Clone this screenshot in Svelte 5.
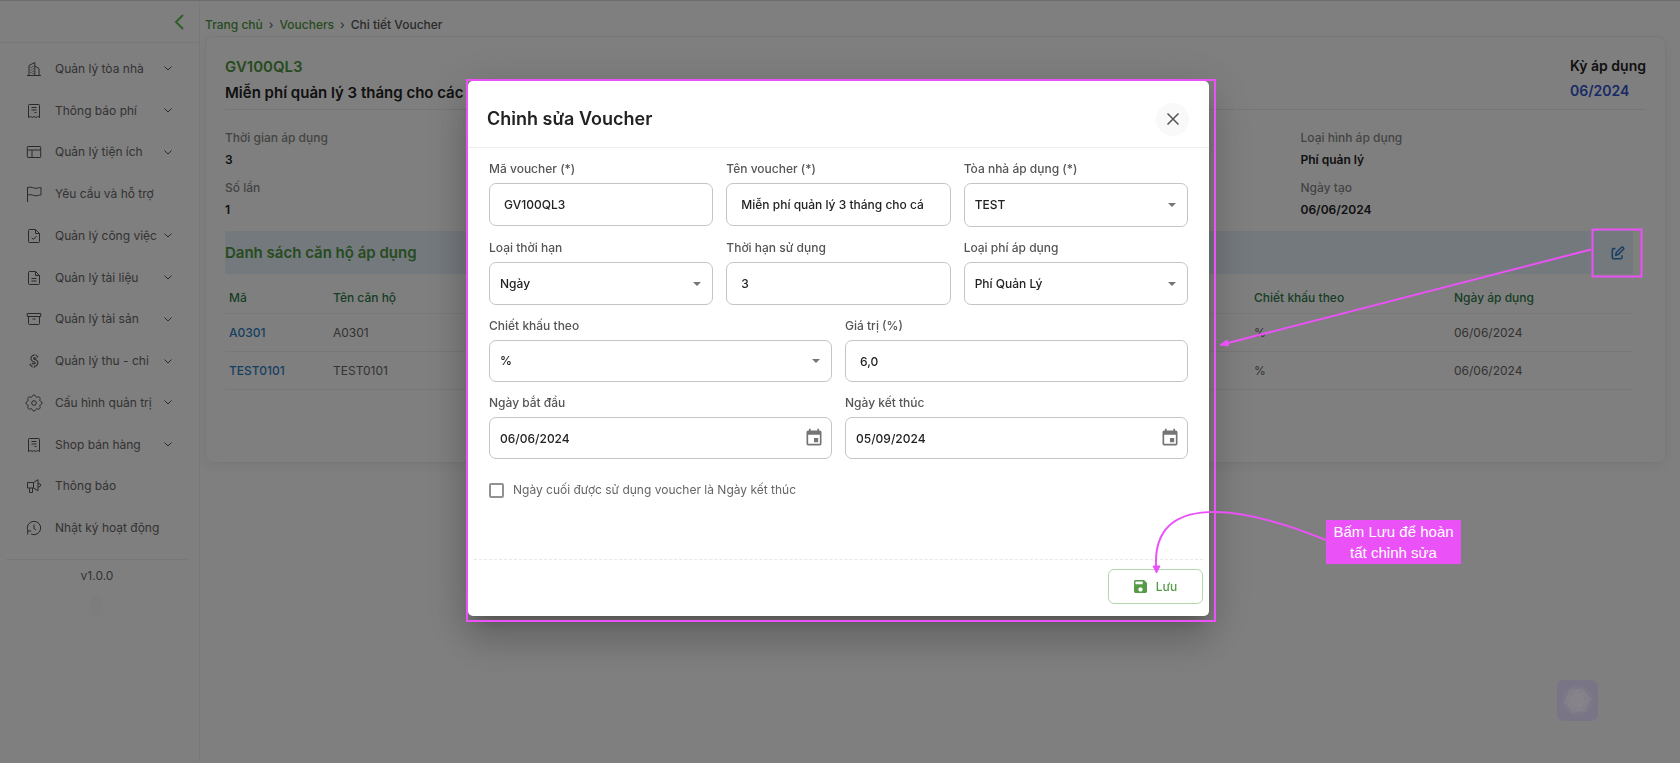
<script>
	let menu = [
		{ label: "Quản lý tòa nhà", icon: "building", sub: true },
		{ label: "Thông báo phí", icon: "receipt", sub: true },
		{ label: "Quản lý tiện ích", icon: "layout", sub: true },
		{ label: "Yêu cầu và hỗ trợ", icon: "flag", sub: false },
		{ label: "Quản lý công việc", icon: "fileCheck", sub: true },
		{ label: "Quản lý tài liệu", icon: "file", sub: true },
		{ label: "Quản lý tài sản", icon: "archive", sub: true },
		{ label: "Quản lý thu - chi", icon: "dollar", sub: true },
		{ label: "Cấu hình quản trị", icon: "gear", sub: true },
		{ label: "Shop bán hàng", icon: "receipt", sub: true },
		{ label: "Thông báo", icon: "horn", sub: false },
		{ label: "Nhật ký hoạt động", icon: "history", sub: false },
	];

	// 16x16 outlines
	const icons = {
		building:
			"M1 14.500h14M3 14.500V4.500L8.800 1.500v13M8.800 5L13 7.500v7M5 6v1M5 8.500v1M5 11v1M7 5v1M7 7.500v1M7 10v1M7 12v1",
		receipt:
			"M2.500 14.500V2.300q0-.8.8-.8h9.400q.8 0 .8.8V14.500l-1.900-1-1.800 1-1.800-1-1.800 1-1.800-1zM5.500 4.500h5M5.500 7h5M8.500 9.500h2",
		layout: "M2 2.500h12q.7 0 .7.7v9.600q0 .7-.7.7H2q-.7 0-.7-.7V3.200q0-.7.7-.7zM1.300 6h13.400M6 6v7.500",
		flag: "M1.500 16V1.200M1.500 1.500c4-1.500 6 1.500 9.500.7 2-.4 3-.9 4-.7v7.500c-1-.2-2 .3-4 .7-3.500.8-5.500-2.200-9.500-.7",
		fileCheck:
			"M3.500 1.500h6l4 4v8q0 1-1 1h-9q-1 0-1-1v-11q0-1 1-1zM9.500 1.500v4h4M5.700 9.700l1.700 1.700 3-3.200",
		file: "M3.500 1.500h6l4 4v8q0 1-1 1h-9q-1 0-1-1v-11q0-1 1-1zM9.500 1.500v4h4M5.500 8.500h5M5.500 11h5",
		archive: "M1.300 2.500h13.400v3H1.300zM2.500 5.500v7q0 1 1 1h9q1 0 1-1v-7M6.500 8h3",
		dollar:
			"M11.200 4.800Q10 3.400 8.300 3.600 6 4 6.200 5.800 6.500 7.200 8.500 7.800 11 8.500 10.500 10.400 9.800 12.400 7.500 12.200 5.600 12 4.800 10.400M9.200 1.700L8.800 3.600M7.400 12.200L7 14.300",
		gear: "M9.796 1.343c-.527-1.790-3.065-1.790-3.592 0l-.094.319a.873.873 0 0 1-1.255.520l-.292-.160c-1.640-.892-3.433.902-2.540 2.541l.159.292a.873.873 0 0 1-.520 1.255l-.319.094c-1.790.527-1.790 3.065 0 3.592l.319.094a.873.873 0 0 1 .520 1.255l-.160.292c-.892 1.640.901 3.434 2.541 2.540l.292-.159a.873.873 0 0 1 1.255.520l.094.319c.527 1.790 3.065 1.790 3.592 0l.094-.319a.873.873 0 0 1 1.255-.520l.292.160c1.640.893 3.434-.902 2.540-2.541l-.159-.292a.873.873 0 0 1 .520-1.255l.319-.094c1.790-.527 1.790-3.065 0-3.592l-.319-.094a.873.873 0 0 1-.520-1.255l.160-.292c.893-1.640-.902-3.433-2.541-2.540l-.292.159a.873.873 0 0 1-1.255-.520zM10.300 8a2.300 2.300 0 1 1-4.600 0 2.300 2.300 0 1 1 4.600 0z",
		horn: "M1.500 4.500h6L12 1.700v11L7.500 10h-6zM7.500 4.500V10M3.500 10v4.500h3V10M12 5.500q2.800 0 2.800 1.700T12 9",
		history: "M2 11A6.700 6.700 0 1 1 5 14M1.700 14.500V11h3.500M8 4.500v4l2 1.500",
	};

	let rows = [
		{ code: "A0301", name: "A0301", by: "%", date: "06/06/2024" },
		{ code: "TEST0101", name: "TEST0101", by: "%", date: "06/06/2024" },
	];

	let code = "GV100QL3";
	let title = "Miễn phí quản lý 3 tháng cho cá";
	let duration = "3";
	let amount = "6,0";
	let startDate = "06/06/2024";
	let endDate = "05/09/2024";
	let lastDay = false;
</script>

{#snippet caret()}
	<svg class="caret" viewBox="0 0 8 4" aria-hidden="true"><path d="M0 0h8L4 4z" /></svg>
{/snippet}

{#snippet calendar()}
	<svg viewBox="0 0 24 24" width="20" height="20" aria-hidden="true">
		<path
			fill="currentColor"
			d="M17 12h-5v5h5v-5zM16 1v2H8V1H6v2H5c-1.100 0-2 .9-2 2v14c0 1.100.9 2 2 2h14c1.100 0 2-.9 2-2V5c0-1.100-.9-2-2-2h-1V1h-2zm3 18H5V8h14v11z"
		/>
	</svg>
{/snippet}

<div class="page">
	<aside>
		<div class="side-head">
			<button aria-label="Thu gọn">
				<svg viewBox="0 0 10 16" width="10" height="16"><path d="M9 1L2 8l7 7" /></svg>
			</button>
		</div>
		<nav>
			{#each menu as item}
				<a href="#menu">
					<svg class="icon" viewBox="0 0 16 16">
						{#if item.icon === "dollar"}
							<path class="outer" d={icons.dollar} />
							<path class="inner" d={icons.dollar} />
						{:else}
							<path d={icons[item.icon]} />
						{/if}
					</svg>
					<span>{item.label}</span>
					{#if item.sub}
						<svg class="chevron" viewBox="0 0 8 5"><path d="M.5.5L4 4 7.500.5" /></svg>
					{/if}
				</a>
			{/each}
		</nav>
		<p class="version">v1.0.0</p>
		<div class="pill"></div>
	</aside>

	<main>
		<div class="breadcrumb">
			<a href="#home">Trang chủ</a>
			<span class="sep">›</span>
			<a href="#vouchers">Vouchers</a>
			<span class="sep">›</span>
			<span>Chi tiết Voucher</span>
		</div>

		<section class="card">
			<div class="card-head">
				<div>
					<h2 class="green">GV100QL3</h2>
					<h2>Miễn phí quản lý 3 tháng cho các</h2>
				</div>
				<div class="period">
					<p>Kỳ áp dụng</p>
					<p class="blue">06/2024</p>
				</div>
			</div>

			<div class="info">
				<dl>
					<dt>Thời gian áp dụng</dt>
					<dd>3</dd>
					<dt>Số lần</dt>
					<dd>1</dd>
				</dl>
				<dl class="last">
					<dt>Loại hình áp dụng</dt>
					<dd>Phí quản lý</dd>
					<dt>Ngày tạo</dt>
					<dd>06/06/2024</dd>
				</dl>
			</div>

			<div class="list">
				<div class="list-head">
					<h3>Danh sách căn hộ áp dụng</h3>
					<button aria-label="Chỉnh sửa">
						<svg viewBox="0 0 16 16" width="14" height="14">
							<path d="M5 3H3Q1.500 3 1.500 4.500v8.500q0 1.500 1.500 1.500h8q1.500 0 1.500-1.500v-2.500M5.500 10.500l.5-3 6-6q1-.8 2 .2t.2 2l-6 6z" />
						</svg>
					</button>
				</div>
				<table>
					<thead>
						<tr>
							<th class="c-code">Mã</th>
							<th>Tên căn hộ</th>
							<th class="c-by">Chiết khấu theo</th>
							<th class="c-date">Ngày áp dụng</th>
						</tr>
					</thead>
					<tbody>
						{#each rows as row}
							<tr>
								<td><a href="#unit">{row.code}</a></td>
								<td>{row.name}</td>
								<td>{row.by}</td>
								<td>{row.date}</td>
							</tr>
						{/each}
					</tbody>
				</table>
			</div>
		</section>
	</main>
</div>

<div class="backdrop">
	<div class="dialog" role="dialog" aria-labelledby="dialog-title">
		<header>
			<h1 id="dialog-title">Chỉnh sửa Voucher</h1>
			<button aria-label="Đóng">
				<svg viewBox="0 0 12 12" width="12" height="12"><path d="M.5.5l11 11M11.500.5l-11 11" /></svg>
			</button>
		</header>

		<form>
			<div class="row three">
				<div class="field">
					<label for="code">Mã voucher (*)</label>
					<input id="code" type="text" bind:value={code} />
				</div>
				<div class="field">
					<label for="title">Tên voucher (*)</label>
					<input id="title" type="text" bind:value={title} />
				</div>
				<div class="field">
					<label for="building">Tòa nhà áp dụng (*)</label>
					<div class="select">
						<select id="building" class="tall"><option>TEST</option></select>
						{@render caret()}
					</div>
				</div>
			</div>
			<div class="row three">
				<div class="field">
					<label for="unit">Loại thời hạn</label>
					<div class="select">
						<select id="unit"><option>Ngày</option></select>
						{@render caret()}
					</div>
				</div>
				<div class="field">
					<label for="duration">Thời hạn sử dụng</label>
					<input id="duration" type="text" bind:value={duration} />
				</div>
				<div class="field">
					<label for="fee">Loại phí áp dụng</label>
					<div class="select">
						<select id="fee"><option>Phí Quản Lý</option></select>
						{@render caret()}
					</div>
				</div>
			</div>
			<div class="row">
				<div class="field">
					<label for="by">Chiết khấu theo</label>
					<div class="select">
						<select id="by" class="short"><option>%</option></select>
						{@render caret()}
					</div>
				</div>
				<div class="field">
					<label for="amount">Giá trị (%)</label>
					<input id="amount" class="short" type="text" bind:value={amount} />
				</div>
			</div>
			<div class="row">
				<div class="field">
					<label for="start">Ngày bắt đầu</label>
					<div class="date">
						<input id="start" type="text" bind:value={startDate} />
						<button type="button" aria-label="Chọn ngày bắt đầu">{@render calendar()}</button>
					</div>
				</div>
				<div class="field">
					<label for="end">Ngày kết thúc</label>
					<div class="date">
						<input id="end" type="text" bind:value={endDate} />
						<button type="button" aria-label="Chọn ngày kết thúc">{@render calendar()}</button>
					</div>
				</div>
			</div>
			<label class="check">
				<input type="checkbox" bind:checked={lastDay} />
				Ngày cuối được sử dụng voucher là Ngày kết thúc
			</label>
		</form>

		<footer>
			<button class="save">
				<svg viewBox="3 3 18 18" width="13" height="13">
					<path
						d="M17 3H5c-1.100 0-2 .9-2 2v14c0 1.100.9 2 2 2h14c1.100 0 2-.9 2-2V7l-4-4zm-5 16c-1.660 0-3-1.340-3-3s1.340-3 3-3 3 1.340 3 3-1.340 3-3 3zm3-10H5V5h10v4z"
					/>
				</svg>
				Lưu
			</button>
		</footer>
		<div class="frame"></div>
	</div>
</div>

<button class="widget" aria-label="Trợ lý">
	<svg viewBox="-20 -20 40 40">
		<circle r="15" opacity=".2" />
		{#each [0, 60, 120, 180, 240, 300] as angle}
			<path d="M-5-9L5-13 10-5 9-2 3-7-5-3z" opacity=".45" transform="rotate({angle})" />
		{/each}
		<circle r="7" opacity=".7" />
	</svg>
</button>

<!-- guide marks -->
<svg class="marks" aria-hidden="true">
	<rect x="1592.500" y="229.500" width="49" height="47" />
	<path d="M1591 249.500L1226 343.500" />
	<path class="tip" d="M1220 345l7-5 1.500 6z" />
	<path d="M1326 540C1240 505 1153 492 1156 566" />
	<path class="tip" d="M1153 566h7l-3.500 7z" />
</svg>
<div class="note">Bấm Lưu để hoàn<br />tất chỉnh sửa</div>

<style>
	:global(body) {
		background: #fff;
		overflow: hidden;
		font-family: Inter, "Noto Sans", sans-serif;
		font-size: 12px;
		line-height: 20px;
		color: #666;
	}

	.page {
		display: flex;
		min-height: 100vh;
		box-sizing: border-box;
		border-top: 1px solid #d8d8d8;
		border-bottom: 1px solid #fff;
	}

	p,
	h1,
	h2,
	h3,
	dl,
	dd {
		margin: 0;
	}

	a {
		text-decoration: none;
		color: inherit;
	}

	button {
		padding: 0;
		border: 0;
		background: none;
		font: inherit;
	}

	svg {
		display: block;
	}

	aside {
		width: 200px;
		flex: none;
		box-sizing: border-box;
		border-right: 1px solid #f2f2f2;
	}

	.side-head {
		display: flex;
		align-items: center;
		justify-content: flex-end;
		height: 41px;
		padding-right: 15px;
		border-bottom: 1px solid #f0f0f0;
	}

	.side-head path {
		fill: none;
		stroke: #5cc04c;
		stroke-width: 2;
	}

	nav {
		display: flex;
		flex-direction: column;
		height: 501px;
		margin-top: 5px;
	}

	nav a {
		flex: 1;
		display: flex;
		align-items: center;
		padding-left: 26px;
		padding-right: 27px;
	}

	nav span {
		flex: 1;
		padding-left: 13px;
		white-space: nowrap;
	}

	.icon {
		width: 16px;
		height: 16px;
		fill: none;
		stroke: #555;
		overflow: visible;
	}

	.icon .outer {
		stroke-width: 3.6;
	}

	.icon .inner {
		stroke: #fff;
		stroke-width: 1.5;
	}

	.chevron {
		width: 8px;
		height: 5px;
		fill: none;
		stroke: #555;
	}

	.version {
		margin: 10px 11px 0 6px;
		padding: 6px 0;
		border-top: 1px solid #f0f0f0;
		text-align: center;
	}

	.pill {
		width: 13px;
		height: 20px;
		margin: 4px 0 0 90px;
		border-radius: 6px;
		background: #fbfbfb;
	}

	main {
		flex: 1;
		padding: 14px 14px 0 5px;
	}

	.breadcrumb {
		display: flex;
		gap: 6px;
		font-weight: 500;
		color: #555;
	}

	.breadcrumb a,
	.green,
	h3 {
		color: #4f9640;
	}

	.sep {
		font-weight: 400;
	}

	.card {
		box-sizing: border-box;
		margin-top: 1px;
		min-height: 427px;
		padding: 16px 19px 0;
		border: 1px solid #f0f0f0;
		border-radius: 8px;
		box-shadow: 0 4px 14px rgba(0, 0, 0, 0.06);
	}

	.card-head {
		display: flex;
		justify-content: space-between;
		height: 56px;
		border-bottom: 1px solid #ececec;
	}

	h2 {
		font-size: 15px;
		line-height: 24px;
		font-weight: 600;
		color: #222;
		white-space: nowrap;
	}

	h2.green {
		line-height: 28px;
		color: #4f9640;
	}

	.period {
		font-size: 14px;
		line-height: 25px;
		font-weight: 600;
		color: #222;
	}

	.period .blue {
		color: #3352cc;
	}

	.info {
		display: grid;
		grid-template-columns: repeat(4, 1fr);
		gap: 13px;
		padding-top: 15px;
		font-weight: 500;
	}

	.info .last {
		grid-column: 4;
	}

	dt {
		line-height: 25px;
		color: #888;
	}

	dd {
		padding-bottom: 5px;
		font-weight: 600;
		color: #222;
	}

	.list {
		margin: 6px 13px 0 0;
	}

	.list-head {
		display: flex;
		align-items: center;
		justify-content: space-between;
		height: 43px;
		padding-right: 8px;
		background: #e9f2fb;
	}

	h3 {
		font-size: 15px;
		font-weight: 600;
	}

	.list-head path {
		fill: none;
		stroke: #2f7fc4;
		stroke-width: 1.8;
	}

	table {
		width: 100%;
		margin-top: 9px;
		border-collapse: collapse;
		table-layout: fixed;
		text-align: left;
	}

	th,
	td {
		padding: 0 4px;
		height: 37px;
		border-bottom: 1px solid #f0f0f0;
	}

	th {
		height: 30px;
		font-weight: 500;
		color: #2f7d4a;
	}

	td a {
		font-weight: 500;
		color: #2f7fc4;
	}

	.c-code {
		width: 96px;
	}

	.c-by {
		width: 192px;
	}

	.c-date {
		width: 175px;
	}

	.backdrop {
		position: fixed;
		inset: 0;
		display: flex;
		align-items: flex-start;
		justify-content: center;
		padding: 81px 3px 0 0;
		background: rgba(0, 0, 0, 0.5);
	}

	.dialog {
		position: relative;
		width: 741px;
		border-radius: 5px;
		background: #fff;
		box-shadow:
			0 11px 15px -7px rgba(0, 0, 0, 0.2),
			0 24px 38px 3px rgba(0, 0, 0, 0.14),
			0 9px 46px 8px rgba(0, 0, 0, 0.12);
	}

	.frame {
		position: absolute;
		inset: -2px -7px -6px -2px;
		border: 2px solid #ea52f8;
		pointer-events: none;
	}

	header {
		display: flex;
		align-items: center;
		justify-content: space-between;
		height: 67px;
		padding: 10px 20px 0 19px;
		box-sizing: border-box;
		border-bottom: 1px solid #eee;
	}

	h1 {
		font-size: 18px;
		font-weight: 600;
		color: #222;
	}

	header button {
		display: grid;
		place-items: center;
		width: 33px;
		height: 33px;
		border-radius: 50%;
		background: #f9f9f9;
	}

	header path {
		stroke: #555;
		stroke-width: 1.5;
	}

	form {
		padding: 0 21px;
	}

	.row {
		display: grid;
		grid-template-columns: 1fr 1fr;
		column-gap: 13px;
		padding-top: 11px;
	}

	.three {
		grid-template-columns: repeat(3, 1fr);
	}

	.field label {
		display: block;
		margin-bottom: 4px;
		font-weight: 500;
		color: #555;
	}

	.field input,
	select {
		display: block;
		box-sizing: border-box;
		width: 100%;
		height: 43px;
		padding: 0 25px 0 14px;
		border: 1px solid #c4c4c4;
		border-radius: 7px;
		background: #fff;
		font: inherit;
		font-weight: 500;
		color: #222;
		appearance: none;
	}

	select,
	.date input {
		padding-left: 10px;
	}

	.field .short,
	.date input {
		height: 42px;
	}

	select.tall {
		height: 44px;
	}

	.select,
	.date {
		position: relative;
	}

	.caret {
		position: absolute;
		right: 12px;
		top: 50%;
		width: 8px;
		height: 4px;
		margin-top: -2px;
		fill: #757575;
		pointer-events: none;
	}

	.date button {
		position: absolute;
		right: 8px;
		top: 11px;
		color: #757575;
	}

	.check {
		display: flex;
		align-items: center;
		gap: 9px;
		margin-top: 21px;
	}

	.check input {
		width: 15px;
		height: 15px;
		margin: 0;
		border: 2px solid #929292;
		border-radius: 2px;
		appearance: none;
	}

	footer {
		display: flex;
		justify-content: flex-end;
		margin: 59px 6px 0;
		padding: 9px 0 12px;
		border-top: 1px dashed #e8e8e8;
	}

	.save {
		display: flex;
		align-items: center;
		justify-content: center;
		gap: 9px;
		box-sizing: border-box;
		width: 95px;
		height: 35px;
		border: 1px solid #b5d6ae;
		border-radius: 6px;
		font-weight: 500;
		color: #559b48;
	}

	.save svg {
		fill: #559b48;
	}

	.widget {
		position: fixed;
		right: 82px;
		bottom: 42px;
		width: 41px;
		height: 41px;
		border-radius: 7px;
		background: #797586;
	}

	.widget svg {
		width: 41px;
		height: 41px;
		fill: #8a888b;
	}

	.marks {
		position: absolute;
		left: 0;
		top: 0;
		width: 100%;
		height: 100%;
		fill: none;
		stroke: #ea52f8;
		stroke-width: 2;
		pointer-events: none;
	}

	.marks .tip {
		fill: #ea52f8;
		stroke-width: 1;
	}

	.note {
		position: absolute;
		left: 1326px;
		top: 520px;
		width: 135px;
		padding: 1px 0;
		background: #ea52f8;
		font: 15px/21px "Liberation Sans", sans-serif;
		text-align: center;
		color: #fff;
	}
</style>
